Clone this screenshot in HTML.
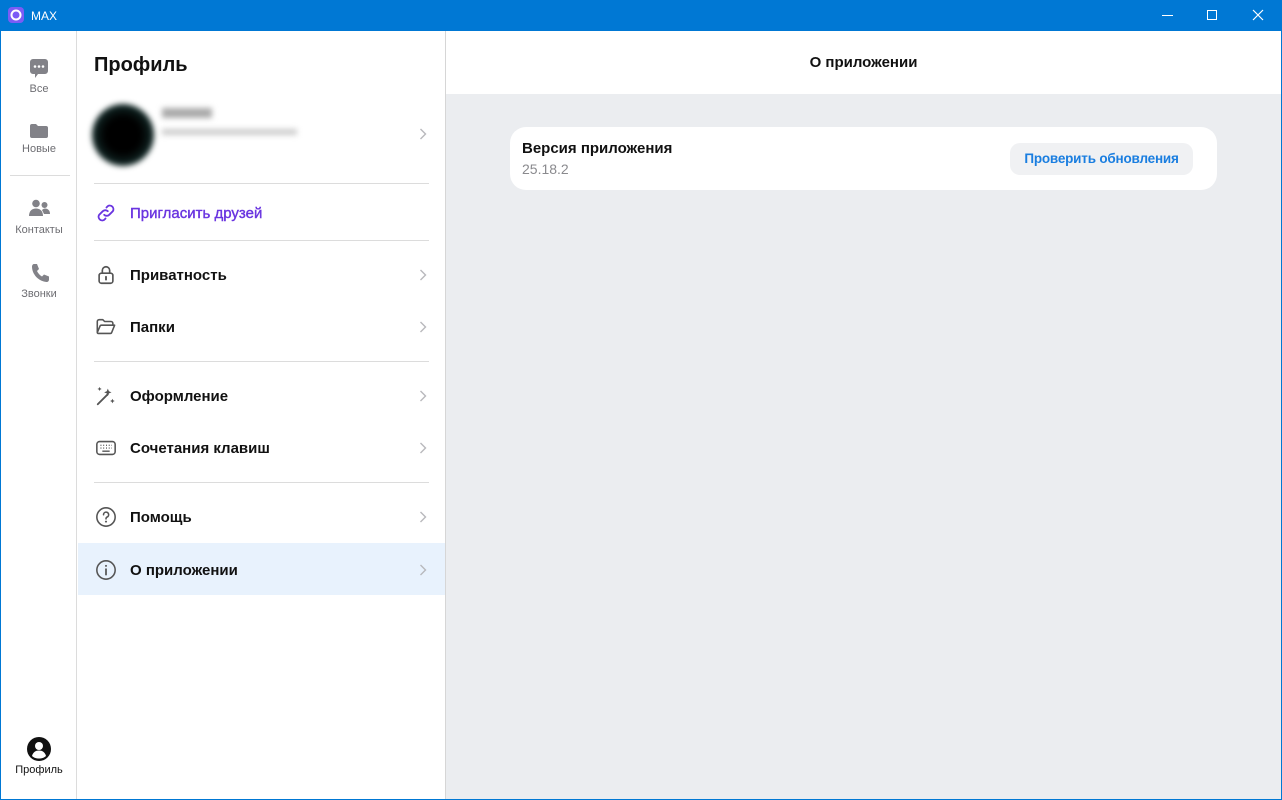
<!DOCTYPE html>
<html><head><meta charset="utf-8"><style>
*{box-sizing:border-box;margin:0;padding:0}
body{width:1282px;height:800px;overflow:hidden;background:#0078d4;font-family:"Liberation Sans","DejaVu Sans",sans-serif;position:relative}
.tb{position:absolute;left:0;top:0;width:1282px;height:31px;background:#0078d4;color:#fff;font-size:12px}
.win{position:absolute;left:1px;top:31px;width:1280px;height:768px;background:#fff}
.rail{position:absolute;left:0;top:0;width:76px;height:768px;border-right:1px solid #dcdcdc;background:#fff}
.ri{position:absolute;left:0;width:76px;text-align:center;font-size:11px;color:#6d6d72}
.panel{position:absolute;left:77px;top:0;width:368px;height:768px;border-right:1px solid #d6d6d6;background:#fff}
.sep{position:absolute;left:16px;width:335px;height:1px;background:#dcdcdc}
.item{position:absolute;left:0;width:367px;height:52px}
.item .t{position:absolute;left:52px;top:2px;line-height:52px;font-size:15px;font-weight:bold;color:#111}
.item svg.ic{position:absolute;left:17px;top:16px}
.chev{position:absolute;left:341px;top:21px}
.main{position:absolute;left:445px;top:0;width:835px;height:768px;background:#ebedf0}
.hdr{height:63px;background:#fff;text-align:center;line-height:63px;font-size:15px;font-weight:bold;color:#111}
.card{position:absolute;left:64px;top:96px;width:707px;height:63px;background:#fff;border-radius:16px}
</style></head><body>
<div class="tb">
<svg style="position:absolute;left:8px;top:7px" width="16" height="16" viewBox="0 0 16 16"><rect width="16" height="16" rx="4" fill="#7b5cf5"/><circle cx="8" cy="8" r="4.5" fill="none" stroke="#fff" stroke-width="2"/></svg>
<span style="position:absolute;left:31px;top:9px">MAX</span>
<div style="position:absolute;left:1162px;top:15px;width:11px;height:1px;background:#fff"></div>
<div style="position:absolute;left:1207px;top:10px;width:10px;height:10px;border:1px solid #fff"></div>
<svg style="position:absolute;left:1252px;top:9px" width="12" height="12"><path d="M1 1L11 11M11 1L1 11" stroke="#fff" stroke-width="1.2"/></svg>
</div>
<div class="win">
<div class="rail">
 <svg style="position:absolute;left:28px;top:27px" width="20" height="22" viewBox="0 0 20 22"><path d="M4 1h12a3 3 0 0 1 3 3v9a3 3 0 0 1-3 3H9l-3 4v-4H4a3 3 0 0 1-3-3V4a3 3 0 0 1 3-3z" fill="#828288"/><circle cx="6" cy="8.5" r="1.3" fill="#fff"/><circle cx="10" cy="8.5" r="1.3" fill="#fff"/><circle cx="14" cy="8.5" r="1.3" fill="#fff"/></svg>
 <div class="ri" style="top:52px">Все</div>
 <svg style="position:absolute;left:28px;top:91px" width="20" height="16" viewBox="0 0 20 16"><path d="M1 4a2 2 0 0 1 2-2h4l2 2h8a2 2 0 0 1 2 2v8a2 2 0 0 1-2 2H3a2 2 0 0 1-2-2z" fill="#828288"/></svg>
 <div class="ri" style="top:112px">Новые</div>
 <div style="position:absolute;left:9px;top:144px;width:60px;height:1px;background:#dcdcdc"></div>
 <svg style="position:absolute;left:28px;top:168px" width="22" height="18" viewBox="0 0 22 18"><circle cx="7" cy="4.5" r="3.8" fill="#828288"/><circle cx="15.5" cy="6" r="3" fill="#828288"/><path d="M0 17c0-5 3-7.5 7-7.5s7 2.5 7 7.5z" fill="#828288"/><path d="M13 11c1-1 2-1.5 3-1.5 3 0 5 2 5 5.5h-6z" fill="#828288"/></svg>
 <div class="ri" style="top:193px">Контакты</div>
 <svg style="position:absolute;left:30px;top:232px" width="18" height="20" viewBox="0 0 18 20"><path d="M3 1l3 0 2 5-2 2c1 2 3 4.5 5 5.5l2-2 5 2v3c0 1.5-1 2.5-2.5 2.5C7 18 1 11 1 3.5 1 2 2 1 3 1z" fill="#828288"/></svg>
 <div class="ri" style="top:257px">Звонки</div>
 <svg style="position:absolute;left:26px;top:706px" width="24" height="24" viewBox="0 0 24 24"><circle cx="12" cy="12" r="12" fill="#111"/><circle cx="12" cy="9" r="4" fill="#fff"/><path d="M5 19c1-4 4-5.5 7-5.5s6 1.5 7 5.5c-1.5 1.5-4 2.5-7 2.5s-5.5-1-7-2.5z" fill="#fff"/></svg>
 <div class="ri" style="top:733px;color:#111">Профиль</div>
</div>
<div class="panel">
 <div style="position:absolute;left:16px;top:23px;font-size:20px;font-weight:bold;color:#111">Профиль</div>
 <div style="position:absolute;left:14px;top:73px;width:62px;height:62px;border-radius:50%;background:radial-gradient(circle,#000 40%,#15302e 75%,#cfd6d6 100%);filter:blur(3px)"></div>
 <div style="position:absolute;left:84px;top:77px;width:50px;height:10px;background:#aaa;filter:blur(3px)"></div>
 <div style="position:absolute;left:84px;top:98px;width:135px;height:6px;background:#ccc;filter:blur(3px)"></div>
 <svg class="chev" style="top:97px" width="8" height="12"><path d="M1.5 1l5 5-5 5" fill="none" stroke="#b8b8bc" stroke-width="1.4"/></svg>
 <div class="sep" style="top:152px"></div>
 <div class="item" style="top:155px"><svg class="ic" width="22" height="22" viewBox="0 0 24 24"><path d="M10 14a4 4 0 0 0 5.5 0l4-4a4 4 0 0 0-5.5-5.5l-1.5 1.5M14 10a4 4 0 0 0-5.5 0l-4 4a4 4 0 0 0 5.5 5.5l1.5-1.5" fill="none" stroke="#6a35e0" stroke-width="2" stroke-linecap="round"/></svg><span class="t" style="color:#6a35e0;font-weight:normal;font-size:15px;-webkit-text-stroke:0.4px #6a35e0">Пригласить друзей</span></div>
 <div class="sep" style="top:209px"></div>
 <div class="item" style="top:217px"><svg class="ic" width="22" height="22" viewBox="0 0 24 24"><rect x="4.5" y="10" width="15" height="11" rx="2.5" fill="none" stroke="#555" stroke-width="1.8"/><path d="M8 10V7a4 4 0 0 1 8 0v3" fill="none" stroke="#555" stroke-width="1.8"/><path d="M12 14v3" stroke="#555" stroke-width="2" stroke-linecap="round"/></svg><span class="t">Приватность</span><svg class="chev" width="8" height="12"><path d="M1.5 1l5 5-5 5" fill="none" stroke="#b8b8bc" stroke-width="1.4"/></svg></div>
 <div class="item" style="top:269px"><svg class="ic" width="22" height="22" viewBox="0 0 24 24"><path d="M2.5 18V6a2 2 0 0 1 2-2h4l2 2h7a2 2 0 0 1 2 2v2M2.5 18l3-7a1.5 1.5 0 0 1 1.4-1h14.5l-3.2 8a1.5 1.5 0 0 1-1.4 1H3.5a1 1 0 0 1-1-1z" fill="none" stroke="#555" stroke-width="1.7" stroke-linejoin="round"/></svg><span class="t">Папки</span><svg class="chev" width="8" height="12"><path d="M1.5 1l5 5-5 5" fill="none" stroke="#b8b8bc" stroke-width="1.4"/></svg></div>
 <div class="sep" style="top:330px"></div>
 <div class="item" style="top:338px"><svg class="ic" width="22" height="22" viewBox="0 0 24 24"><path d="M3 21L14 10" stroke="#555" stroke-width="2" stroke-linecap="round"/><path d="M14 4l1.2 2.8L18 8l-2.8 1.2L14 12l-1.2-2.8L10 8l2.8-1.2zM5 2l.7 1.6L7.3 4.3 5.7 5 5 6.6 4.3 5 2.7 4.3 4.3 3.6zM19 15l.8 1.7 1.7.8-1.7.8-.8 1.7-.8-1.7-1.7-.8 1.7-.8z" fill="#555"/></svg><span class="t">Оформление</span><svg class="chev" width="8" height="12"><path d="M1.5 1l5 5-5 5" fill="none" stroke="#b8b8bc" stroke-width="1.4"/></svg></div>
 <div class="item" style="top:390px"><svg class="ic" width="22" height="22" viewBox="0 0 24 24"><rect x="2" y="5" width="20" height="14" rx="3" fill="none" stroke="#555" stroke-width="1.7"/><path d="M6 9h1M9 9h1M12 9h1M15 9h1M18 9h0.5M6 12h1M9 12h1M12 12h1M15 12h1M18 12h0.5M8 15.5h8" stroke="#555" stroke-width="1.5"/></svg><span class="t">Сочетания клавиш</span><svg class="chev" width="8" height="12"><path d="M1.5 1l5 5-5 5" fill="none" stroke="#b8b8bc" stroke-width="1.4"/></svg></div>
 <div class="sep" style="top:451px"></div>
 <div class="item" style="top:459px"><svg class="ic" width="22" height="22" viewBox="0 0 24 24"><circle cx="12" cy="12" r="10" fill="none" stroke="#555" stroke-width="1.7"/><path d="M9.3 9.5a2.8 2.8 0 1 1 3.8 2.6c-.8.4-1.1.9-1.1 1.9" fill="none" stroke="#555" stroke-width="1.7" stroke-linecap="round"/><circle cx="12" cy="17" r="1.1" fill="#555"/></svg><span class="t">Помощь</span><svg class="chev" width="8" height="12"><path d="M1.5 1l5 5-5 5" fill="none" stroke="#b8b8bc" stroke-width="1.4"/></svg></div>
 <div class="item" style="top:512px;background:#e8f2fd"><svg class="ic" width="22" height="22" viewBox="0 0 24 24"><circle cx="12" cy="12" r="10" fill="none" stroke="#555" stroke-width="1.7"/><path d="M12 11v6" stroke="#555" stroke-width="1.9" stroke-linecap="round"/><circle cx="12" cy="7.5" r="1.1" fill="#555"/></svg><span class="t">О приложении</span><svg class="chev" width="8" height="12"><path d="M1.5 1l5 5-5 5" fill="none" stroke="#b8b8bc" stroke-width="1.4"/></svg></div>
</div>
<div class="main">
 <div class="hdr">О приложении</div>
 <div class="card">
  <div style="position:absolute;left:12px;top:13px;font-size:15px;font-weight:bold;color:#111">Версия приложения</div>
  <div style="position:absolute;left:12px;top:34px;font-size:14px;color:#8a8a8e">25.18.2</div>
  <div style="position:absolute;left:500px;top:16px;width:183px;height:32px;background:#f0f1f3;border-radius:10px;text-align:center;line-height:32px;font-size:13.5px;font-weight:bold;color:#1a7ee0;letter-spacing:-0.2px">Проверить обновления</div>
 </div>
</div>
</div>
</body></html>
